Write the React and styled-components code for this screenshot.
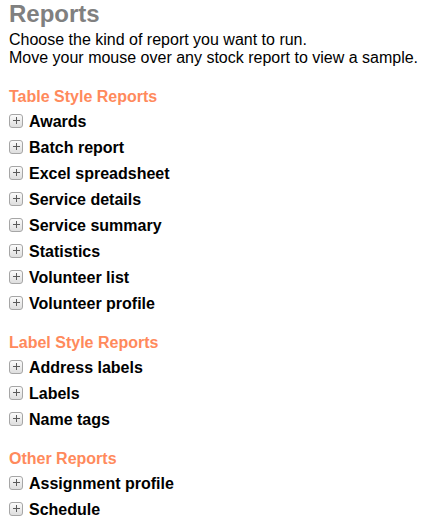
import styled, { createGlobalStyle } from "styled-components";

const GlobalStyle = createGlobalStyle`
  body {
    margin: 0;
    background: #ffffff;
    font-family: "Liberation Sans", Arial, sans-serif;
    color: #000000;
  }
`;

const Page = styled.div`
  padding: 0 9px;
`;

const Title = styled.h1`
  margin: 0;
  font-size: 24px;
  line-height: 27px;
  font-weight: 700;
  color: #808080;
`;

const Intro = styled.p`
  margin: 4px 0 0;
  font-size: 16px;
  line-height: 18px;
`;

const Section = styled.section`
  margin-top: 21px;
`;

const SectionTitle = styled.h3`
  margin: 0 0 7px;
  font-size: 16px;
  line-height: 18px;
  font-weight: 700;
  color: #ff8a5c;
`;

const List = styled.ul`
  margin: 0;
  padding: 0;
  list-style: none;
  display: flex;
  flex-direction: column;
  gap: 8px;
`;

const Item = styled.li`
  display: flex;
  align-items: flex-start;
  gap: 6px;
  font-size: 16px;
  line-height: 18px;
  font-weight: 700;
  cursor: pointer;
`;

const Expander = styled.span`
  flex: none;
  position: relative;
  width: 12px;
  height: 12px;
  margin-top: 1px;
  border: 1px solid #a6a6a6;
  border-radius: 3px;
  background: linear-gradient(#fbfbfb, #dedede);

  &::before,
  &::after {
    content: "";
    position: absolute;
    background: #5a5a5a;
  }
  &::before {
    left: 3px;
    top: 5px;
    width: 7px;
    height: 1px;
  }
  &::after {
    left: 6px;
    top: 2px;
    width: 1px;
    height: 7px;
  }
`;

const sections = [
  {
    title: "Table Style Reports",
    items: [
      "Awards",
      "Batch report",
      "Excel spreadsheet",
      "Service details",
      "Service summary",
      "Statistics",
      "Volunteer list",
      "Volunteer profile",
    ],
  },
  {
    title: "Label Style Reports",
    items: ["Address labels", "Labels", "Name tags"],
  },
  {
    title: "Other Reports",
    items: ["Assignment profile", "Schedule"],
  },
];

export default function App() {
  return (
    <Page>
      <GlobalStyle />
      <Title>Reports</Title>
      <Intro>
        Choose the kind of report you want to run.
        <br />
        Move your mouse over any stock report to view a sample.
      </Intro>
      {sections.map((s) => (
        <Section key={s.title}>
          <SectionTitle>{s.title}</SectionTitle>
          <List>
            {s.items.map((name) => (
              <Item key={name}>
                <Expander />
                {name}
              </Item>
            ))}
          </List>
        </Section>
      ))}
    </Page>
  );
}
